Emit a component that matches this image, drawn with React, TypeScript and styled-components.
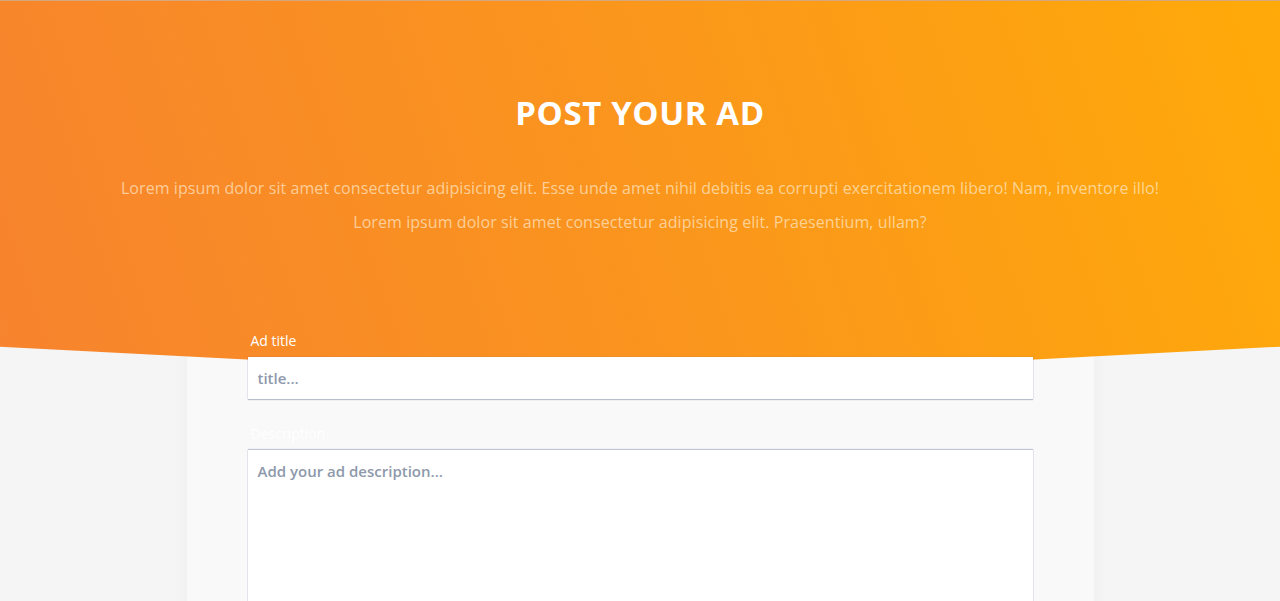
import styled, {createGlobalStyle} from "styled-components";

const GlobalStyle = createGlobalStyle`
    * { box-sizing: border-box; }
    html, body {
        margin: 0;
        padding: 0;
        background-color: #f5f5f6;
        font-family: "Open Sans", "Noto Sans", sans-serif;
    }
`

function App(){
    return(
        <>
            <GlobalStyle/>
            <Page>
                <Hero>
                    <Title>POST YOUR AD</Title>
                    <Lead>
                        Lorem ipsum dolor sit amet consectetur adipisicing elit. Esse unde amet nihil debitis ea corrupti exercitationem libero! Nam, inventore illo!
                        <br/>
                        Lorem ipsum dolor sit amet consectetur adipisicing elit. Praesentium, ullam?
                    </Lead>
                </Hero>
                <Card>
                    <Field>
                        <Label htmlFor="title">Ad title</Label>
                        <Input id="title" type="text" placeholder="title..."/>
                    </Field>
                    <Field>
                        <Label htmlFor="desc">Description</Label>
                        <TextArea id="desc" placeholder="Add your ad description..."/>
                    </Field>
                </Card>
            </Page>
        </>
    )
}

const Page = styled.div`
    display: flex;
    flex-direction: column;
    align-items: center;
    min-height: 100vh;
    border-top: 1px solid #d6a77c;
`

// hero sits above the card background, the form fields above the hero
const Hero = styled.section`
    position: relative;
    z-index: 1;
    width: 100%;
    height: 379px;
    padding-top: 86px;
    display: flex;
    flex-direction: column;
    align-items: center;
    background: linear-gradient(72deg, #f7832e 0%, #fa931f 45%, #ffaa09 100%);
    clip-path: polygon(0 0, 100% 0, 100% 91.2%, 50% 100%, 0 91.2%);
`

const Title = styled.h1`
    margin: 0;
    color: #ffffff;
    font-size: 33px;
    font-weight: 700;
    line-height: 52px;
    letter-spacing: 0.6px;
`

const Lead = styled.p`
    margin: 32px 0 0;
    text-align: center;
    color: rgba(255, 240, 215, 0.66);
    font-size: 16px;
    line-height: 34px;
    letter-spacing: 0.07px;
`

const Card = styled.div`
    width: 907px;
    margin-top: -112px;
    padding: 63px 61px 40px;
    display: flex;
    flex-direction: column;
    gap: 25px;
    background-color: #f9f9f9;
    box-shadow: 0 0 18px rgba(0, 0, 0, 0.03);
`

const Field = styled.div`
    position: relative;
    z-index: 2;
    display: flex;
    flex-direction: column;
    gap: 6px;
`

const Label = styled.label`
    color: #ffffff;
    font-size: 14px;
    line-height: 20px;
    padding-left: 3px;
`

const Input = styled.input`
    height: 42px;
    width: 100%;
    border: none;
    outline: none;
    background: #ffffff;
    padding: 0 10px;
    font-family: inherit;
    font-size: 15px;
    box-shadow: 0 1px 1px rgba(60, 80, 120, 0.3), 0 0 1px rgba(60, 80, 120, 0.35);
    &::placeholder {
        color: #8e99ab;
        font-weight: 600;
    }
`

const TextArea = styled.textarea`
    height: 220px;
    width: 100%;
    border: none;
    outline: none;
    resize: none;
    background: #ffffff;
    padding: 11px 10px;
    font-family: inherit;
    font-size: 15px;
    box-shadow: 0 -1px 1px rgba(60, 80, 120, 0.25), 0 0 1px rgba(60, 80, 120, 0.4);
    &::placeholder {
        color: #8e99ab;
        font-weight: 600;
    }
`

export default App
